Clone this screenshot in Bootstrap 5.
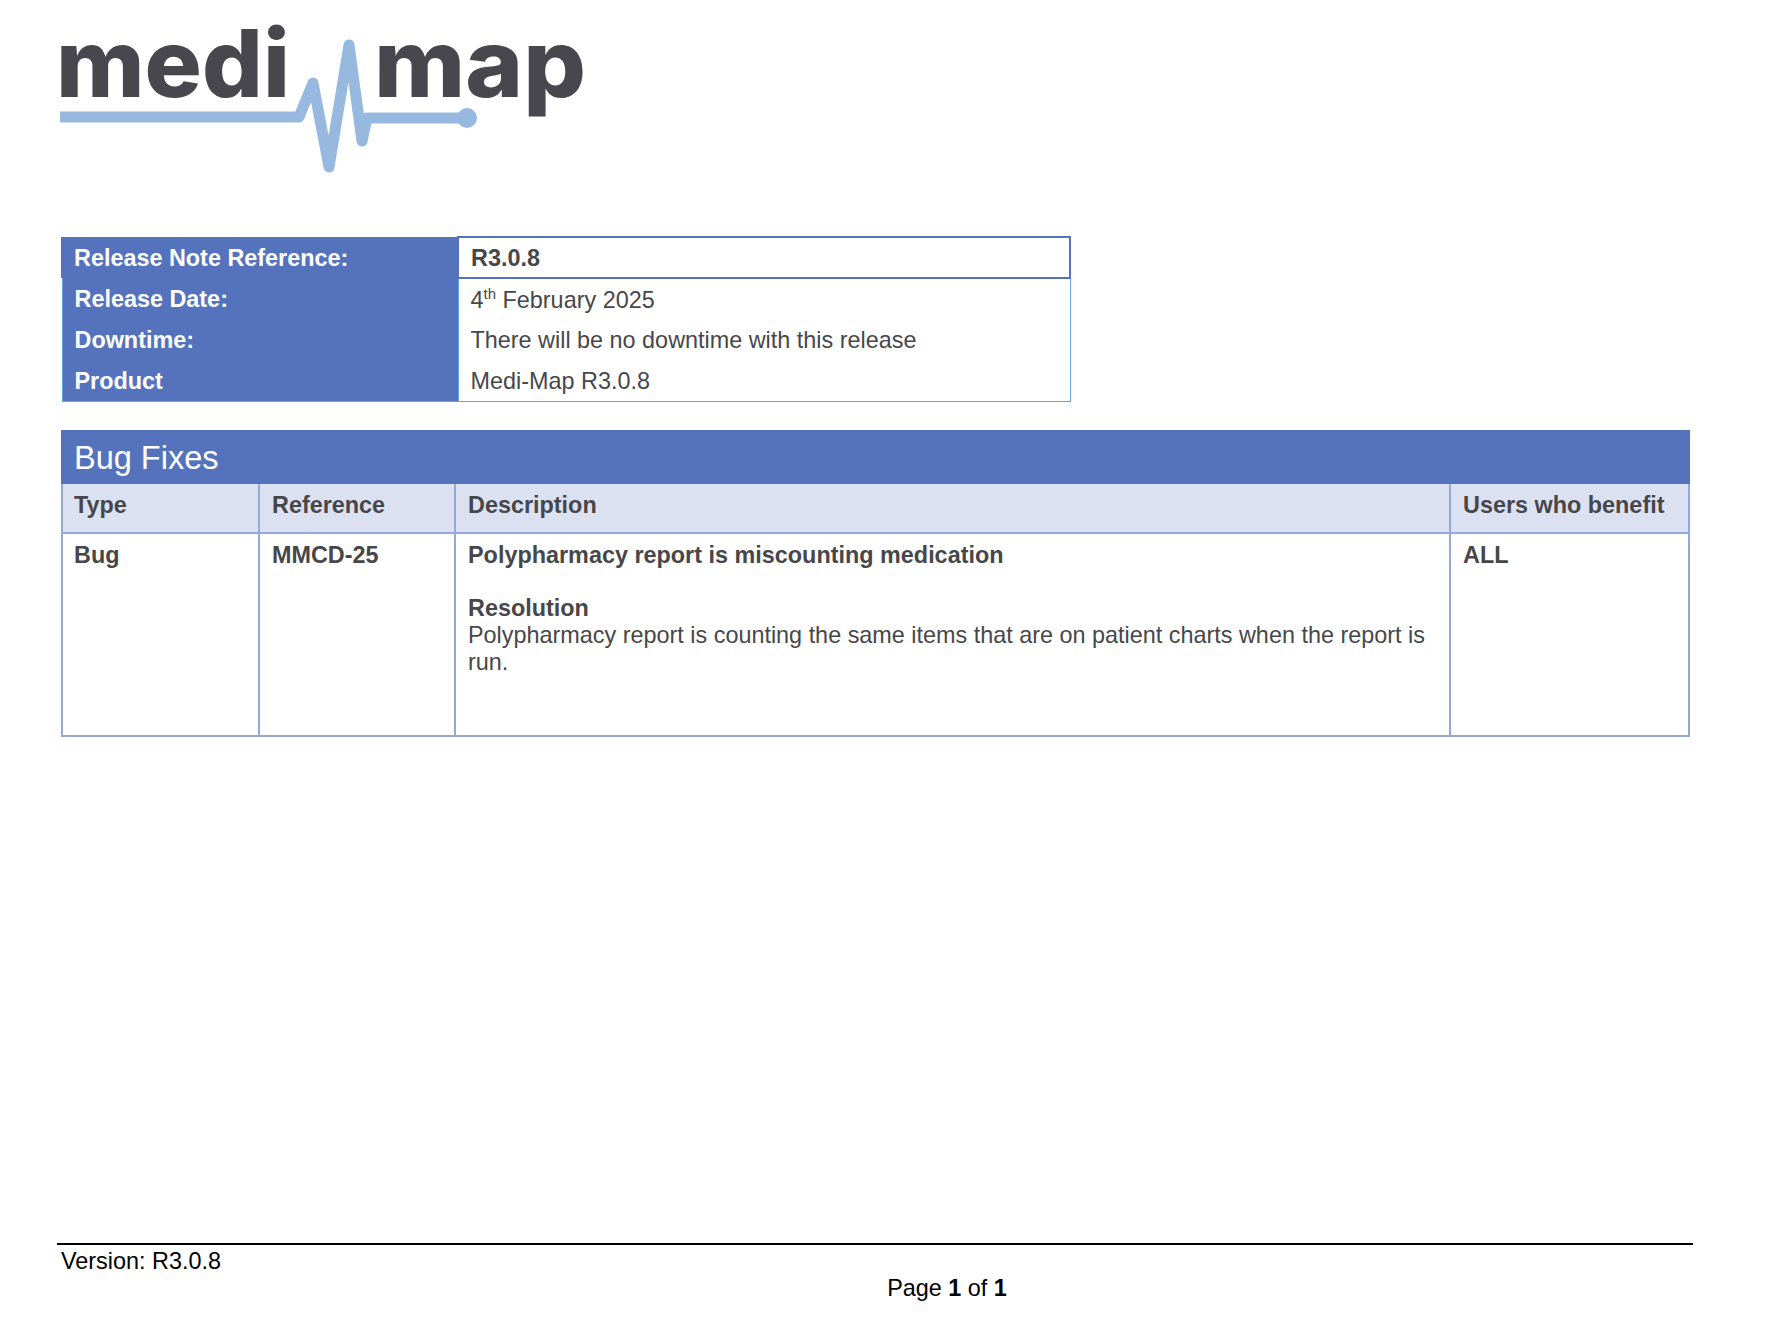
<!doctype html>
<html lang="en">
<head>
<meta charset="utf-8">
<title>Release Note R3.0.8</title>
<link href="https://cdn.jsdelivr.net/npm/bootstrap@5.3.0/dist/css/bootstrap.min.css" rel="stylesheet">
<style>
html,body{height:100%;}
body{font-family:"Liberation Sans",Arial,sans-serif;color:#47474b;background:#fff;font-size:23.4px;}
.doc-page{height:1330px;padding:0 97px 0 49px;display:flex;flex-direction:column;overflow:hidden;}
.doc-logo{display:block;width:560px;height:190px;margin:0 0 46px -9px;flex:none;}
.doc-body{padding:0 3px 0 12px;}
.meta-tbl{width:1010px;table-layout:fixed;border-collapse:collapse;margin:0 0 28px 0;font-size:23.4px;line-height:1.15;}
.meta-tbl th{width:396px;background:#5573bc;color:#fff;font-weight:700;padding:2px 12px 0 12px;height:41px;border-left:1px solid #5aa9e6;}
.meta-tbl td{padding:2px 12px 0 12px;height:41px;border-left:1px solid #5aa9e6;border-right:1px solid #5aa9e6;background:#fff;}
.meta-tbl tr:last-child th,.meta-tbl tr:last-child td{border-bottom:1px solid #5aa9e6;}
.meta-tbl tbody tr:first-child th{border-left:2px solid #5573bc;padding-left:11px;}
.meta-tbl tbody tr:first-child td{border:2px solid #5573bc;font-weight:700;padding-left:12px;}
.meta-tbl sup{font-size:15px;top:-.55em;line-height:0;}
.bug-tbl{width:1629px;table-layout:fixed;border-collapse:collapse;font-size:23.4px;line-height:27px;}
.bug-tbl caption{caption-side:top;background:#5573bc;color:#fff;padding:0 13px;height:54px;font-size:32.5px;line-height:56px;}
.bug-tbl th,.bug-tbl td{border:2px solid #95a8da;padding:9px 12px;vertical-align:top;font-weight:700;}
.bug-tbl thead th{background:#dce1f2;height:49px;border-top:0;padding-top:8px;}
.bug-tbl td{height:203px;padding-top:8px;}
.bug-tbl th:first-child,.bug-tbl td:first-child{padding-left:11px;}
.col-type{width:197px;}
.col-ref{width:196px;}
.col-users{width:239px;}
.bug-tbl td .res-title{margin-top:26px;}
.bug-tbl td .res-text{font-weight:400;margin:0;}
.doc-foot{margin:auto 0 0 8px;border-top:2px solid #000;color:#000;height:87px;font-size:23.4px;line-height:28px;padding:2px 0 0 4px;}
.foot-page{text-align:center;padding-left:140px;margin-top:-1px;}
.logo-word{font-family:Inter,"Liberation Sans",sans-serif;font-weight:800;font-size:94px;fill:#47474d;}
</style>
</head>
<body>
<div class="doc-page">
  <svg class="doc-logo" viewBox="0 0 560 190" role="img" aria-label="medi map logo">
    <text class="logo-word" x="16" y="97" textLength="234" lengthAdjust="spacingAndGlyphs">medi</text>
    <text class="logo-word" x="334" y="97" textLength="212" lengthAdjust="spacingAndGlyphs">map</text>
    <polyline points="20,117 259,117 273,83 289,167 309,45 322,141 327,118 427,118" fill="none" stroke="#98b9df" stroke-width="11" stroke-linejoin="round" stroke-linecap="butt"/>
    <circle cx="427" cy="118" r="10" fill="#98b9df"/>
  </svg>
  <div class="doc-body">
    <table class="meta-tbl">
      <tbody>
        <tr><th scope="row">Release Note Reference:</th><td>R3.0.8</td></tr>
        <tr><th scope="row">Release Date:</th><td>4<sup>th</sup> February 2025</td></tr>
        <tr><th scope="row">Downtime:</th><td>There will be no downtime with this release</td></tr>
        <tr><th scope="row">Product</th><td>Medi-Map R3.0.8</td></tr>
      </tbody>
    </table>
    <table class="bug-tbl">
      <caption>Bug Fixes</caption>
      <thead>
        <tr><th class="col-type">Type</th><th class="col-ref">Reference</th><th>Description</th><th class="col-users">Users who benefit</th></tr>
      </thead>
      <tbody>
        <tr>
          <td>Bug</td>
          <td>MMCD-25</td>
          <td>
            <div>Polypharmacy report is miscounting medication</div>
            <div class="res-title">Resolution</div>
            <p class="res-text">Polypharmacy report is counting the same items that are on patient charts when the report is run.</p>
          </td>
          <td>ALL</td>
        </tr>
      </tbody>
    </table>
  </div>
  <footer class="doc-foot">
    <div>Version: R3.0.8</div>
    <div class="foot-page">Page <b>1</b> of <b>1</b></div>
  </footer>
</div>
<script src="https://cdn.jsdelivr.net/npm/bootstrap@5.3.0/dist/js/bootstrap.bundle.min.js"></script>
</body>
</html>
